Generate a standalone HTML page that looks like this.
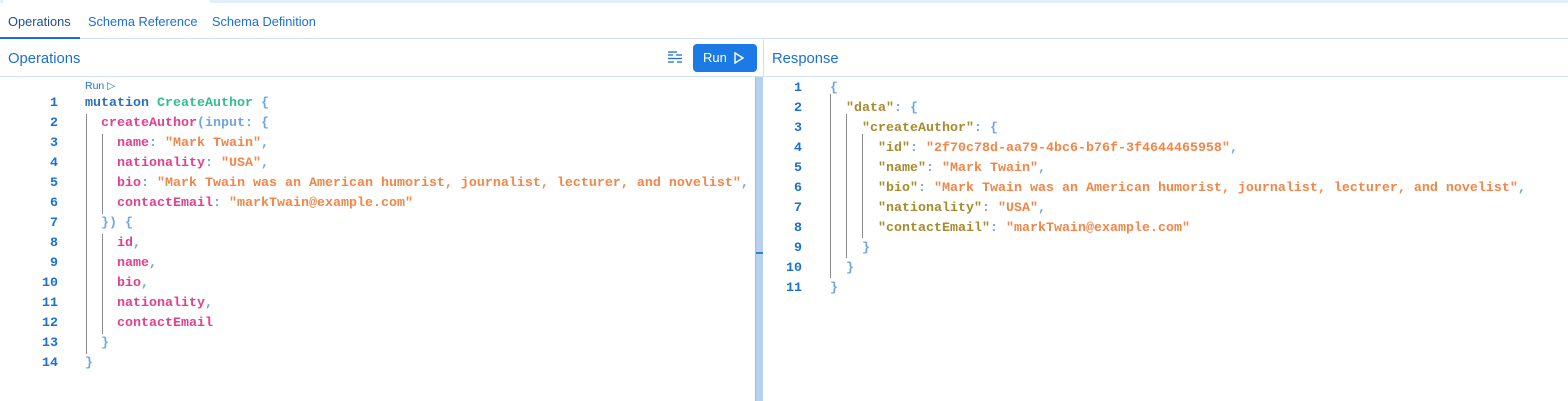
<!DOCTYPE html>
<html><head><meta charset="utf-8"><style>
*{margin:0;padding:0;box-sizing:border-box}
body{width:1568px;height:401px;background:#fff;font-family:"Liberation Sans",sans-serif;position:relative;overflow:hidden}
.a{position:absolute}
.code{font-family:"Liberation Mono",monospace;font-size:13.33px;font-weight:bold;white-space:pre;line-height:20px}
.ln{color:#1a6fd6;text-align:right;width:30px}
.k{color:#2d6fbf}.t{color:#2fbf8c}.b{color:#6ea6e2}.f{color:#e0408c}.s{color:#f28547}.j{color:#a68b2c}
.g{position:absolute;width:1px;background:#888}
</style></head><body>
<div class="a" style="left:0;top:0;width:3px;height:3px;background:#e1eefb"></div>
<div class="a" style="left:210px;top:0;width:1358px;height:3px;background:#e1eefb"></div>
<div class="a" style="left:0;top:38px;width:1568px;height:1px;background:#cfe2f7"></div>
<div class="a" style="left:0;top:37px;width:80px;height:2px;background:#1a6fd6"></div>
<div class="a" style="left:8px;top:14px;font-size:12.8px;color:#1d4f8f">Operations</div>
<div class="a" style="left:88px;top:14px;font-size:12.8px;color:#1a6fd6">Schema Reference</div>
<div class="a" style="left:212px;top:14px;font-size:12.8px;color:#1a6fd6">Schema Definition</div>
<div class="a" style="left:0;top:76px;width:1568px;height:1px;background:#cfe2f7"></div>
<div class="a" style="left:8px;top:51px;font-size:14.8px;color:#1a6fd6">Operations</div>
<div class="a" style="left:772px;top:51px;font-size:14.8px;color:#1a6fd6">Response</div>
<svg class="a" style="left:668px;top:51px" width="15" height="14"><g stroke="#1a6fd6" stroke-width="1.3"><line x1="0" y1="1" x2="9" y2="1"/><line x1="0" y1="4" x2="5" y2="4"/><line x1="8" y1="4" x2="14" y2="4"/><line x1="0" y1="7.5" x2="14" y2="7.5"/><line x1="0" y1="11" x2="6" y2="11"/><line x1="9" y1="11" x2="14" y2="11"/></g></svg>
<div class="a" style="left:693px;top:44px;width:64px;height:28px;background:#1b7ae6;border-radius:4px;color:#fff;font-size:13px;line-height:28px;padding-left:10px">Run <svg style="vertical-align:-2px;margin-left:4px" width="10" height="12"><path d="M1 1L9 6L1 11Z" fill="none" stroke="#fff" stroke-width="1.4"/></svg></div>
<div class="a" style="left:763px;top:38px;width:1px;height:38px;background:#cfe2f7"></div>
<div class="a" style="left:755px;top:77px;width:8px;height:324px;background:#b6d1ee;border-left:1px solid #9fbfe4"></div>
<div class="a" style="left:756px;top:252px;width:7px;height:2px;background:#2f7fd8"></div>
<div class="a" style="left:85px;top:80px;font-size:10.5px;color:#1a6fd6">Run ▷</div>
<div class="g" style="left:86px;top:114px;height:240px"></div>
<div class="g" style="left:102px;top:134px;height:80px"></div>
<div class="g" style="left:102px;top:234px;height:100px"></div>
<div class="a code ln" style="left:28px;top:94px">1
2
3
4
5
6
7
8
9
10
11
12
13
14</div>
<div class="a code" style="left:85px;top:94px"><span class="k">mutation</span> <span class="t">CreateAuthor</span> <span class="b">{</span>
  <span class="f">createAuthor</span><span class="b">(input: {</span>
    <span class="f">name</span><span class="b">:</span> <span class="s">"Mark Twain"</span><span class="b">,</span>
    <span class="f">nationality</span><span class="b">:</span> <span class="s">"USA"</span><span class="b">,</span>
    <span class="f">bio</span><span class="b">:</span> <span class="s">"Mark Twain was an American humorist, journalist, lecturer, and novelist"</span><span class="b">,</span>
    <span class="f">contactEmail</span><span class="b">:</span> <span class="s">"markTwain@example.com"</span>
  <span class="b">}) {</span>
    <span class="f">id</span><span class="b">,</span>
    <span class="f">name</span><span class="b">,</span>
    <span class="f">bio</span><span class="b">,</span>
    <span class="f">nationality</span><span class="b">,</span>
    <span class="f">contactEmail</span>
  <span class="b">}</span>
<span class="b">}</span></div>
<div class="g" style="left:830px;top:94px;height:184px"></div>
<div class="g" style="left:846px;top:114px;height:144px"></div>
<div class="g" style="left:862px;top:134px;height:104px"></div>
<div class="a code ln" style="left:772px;top:79px">1
2
3
4
5
6
7
8
9
10
11</div>
<div class="a code" style="left:830px;top:79px"><span class="b">{</span>
  <span class="j">"data"</span><span class="b">: {</span>
    <span class="j">"createAuthor"</span><span class="b">: {</span>
      <span class="j">"id"</span><span class="b">:</span> <span class="s">"2f70c78d-aa79-4bc6-b76f-3f4644465958"</span><span class="b">,</span>
      <span class="j">"name"</span><span class="b">:</span> <span class="s">"Mark Twain"</span><span class="b">,</span>
      <span class="j">"bio"</span><span class="b">:</span> <span class="s">"Mark Twain was an American humorist, journalist, lecturer, and novelist"</span><span class="b">,</span>
      <span class="j">"nationality"</span><span class="b">:</span> <span class="s">"USA"</span><span class="b">,</span>
      <span class="j">"contactEmail"</span><span class="b">:</span> <span class="s">"markTwain@example.com"</span>
    <span class="b">}</span>
  <span class="b">}</span>
<span class="b">}</span></div>
</body></html>
